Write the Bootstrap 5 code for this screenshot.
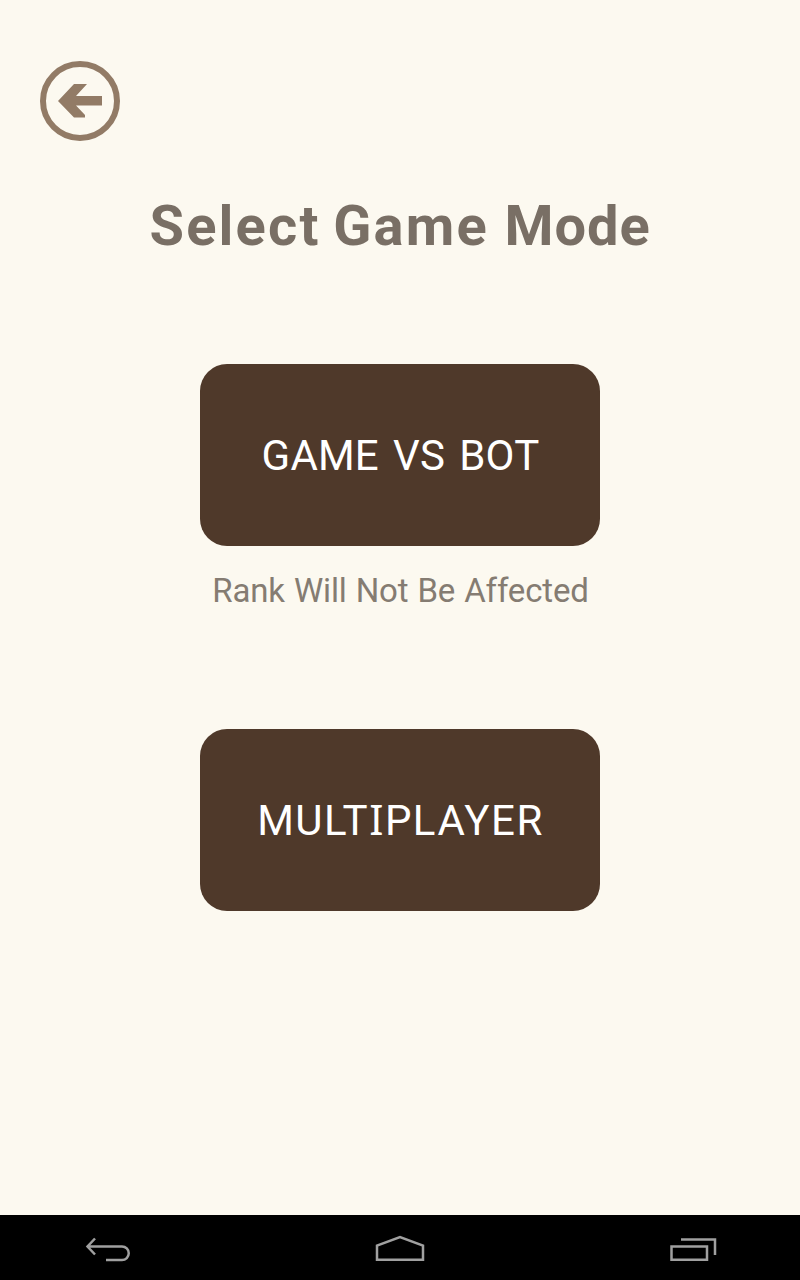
<!DOCTYPE html>
<html lang="en">
<head>
<meta charset="utf-8">
<meta name="viewport" content="width=device-width, initial-scale=1">
<title>Select Game Mode</title>
<link href="https://cdn.jsdelivr.net/npm/bootstrap@5.3.0/dist/css/bootstrap.min.css" rel="stylesheet">
<style>
body { background: #fcf9f0; font-family: Roboto, "Noto Sans", sans-serif; color: #796f65; }
.screen { height: 1280px; }
.back-row { padding: 61px 0 0 40px; height: 141px; }
.back-row svg, .sysbar svg { display: block; }
.title { font-size: 56px; line-height: 66px; font-weight: 700; margin: 52px 0 0; letter-spacing: 2.2px; word-spacing: -3.5px; }
.title .tight { letter-spacing: .9px; margin-left: 3px; }
.mode { width: 400px; height: 182px; border: 0; border-radius: 27px; background: #4f392a; color: #fff; font-size: 42px; line-height: 50px; letter-spacing: .2px; word-spacing: 3.5px; padding: 2px 0 0 1px; }
.mode:hover { background: #4f392a; color: #fff; }
.mode-bot { margin-top: 105px; }
.mode-multi { margin-top: 118px; letter-spacing: 1.5px; }
.serif-i { font-family: "Noto Sans", sans-serif; line-height: 1; }
.note { font-size: 33px; line-height: 40px; margin: 25px 0 0; letter-spacing: -.15px; word-spacing: 1px; padding-left: 1px; color: #857c72; }
.sysbar { height: 65px; background: #000; }
</style>
</head>
<body>
<div class="screen d-flex flex-column overflow-hidden">
  <header class="back-row">
    <a href="#" aria-label="Back" class="d-inline-block">
      <svg width="80" height="80" viewBox="0 0 80 80"><circle cx="40" cy="40" r="37" fill="none" stroke="#927b66" stroke-width="6"/><path fill="#927b66" d="M18 40 34 23H47L36 35H62V44.500H36L45 54V56.500H34Z"/></svg>
    </a>
  </header>
  <main class="flex-grow-1 d-flex flex-column align-items-center text-nowrap">
    <h1 class="title">Select Game <span class="tight">Mode</span></h1>
    <button class="btn mode mode-bot">GAME VS BOT</button>
    <p class="note">Rank Will Not Be Affected</p>
    <button class="btn mode mode-multi">MULT<span class="serif-i">I</span>PLAYER</button>
  </main>
  <nav class="sysbar">
    <svg width="800" height="65" viewBox="0 0 800 65" fill="none" stroke="#a0a0a0" stroke-width="2.5">
      <path d="M95 23.500 87.500 31.500 95 39.500M88 31.500H122A6.750 6.750 0 0 1 122 45H106"/>
      <path d="M377 44.700V30.500L400 22 423 30.500V44.700Z"/>
      <path d="M671.500 31.500H707V44.700H671.500ZM681 24.500H715V40"/>
    </svg>
  </nav>
</div>
<script src="https://cdn.jsdelivr.net/npm/bootstrap@5.3.0/dist/js/bootstrap.bundle.min.js"></script>
</body>
</html>
